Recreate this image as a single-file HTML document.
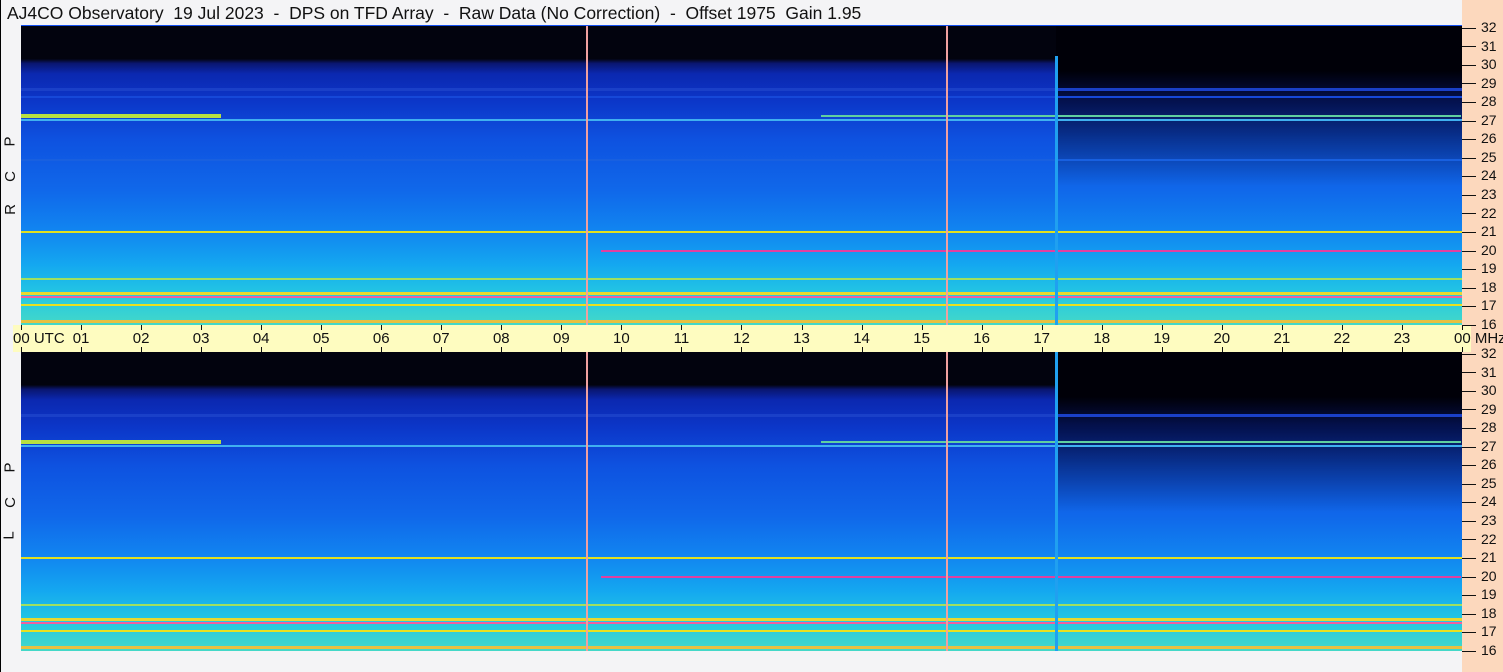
<!DOCTYPE html>
<html><head><meta charset="utf-8"><style>
body{margin:0;width:1503px;height:672px;background:#f4f4f6;position:relative;overflow:hidden;font-family:"Liberation Sans",sans-serif;border-left:1px solid #000;box-sizing:border-box}
.t{position:absolute;left:6px;top:3px;font-size:17.5px;color:#111;white-space:pre}
.rs{position:absolute;left:1461px;top:0;width:42px;height:672px;background:#fcd8bd}
.sp{position:absolute;left:20px;width:1441px;height:299px;overflow:hidden;border-top:1px solid #1450f0;
background:linear-gradient(#02030e 0%,#02030e 11%,#0a1670 12.5%,#0b28b0 16%,#0c36c8 25%,#0e52e0 38%,#1068ea 55%,#1184f0 68%,#14a8f0 80%,#24c8e2 90%,#44d8c8 100%)}
.dk{position:absolute;left:1035px;top:0;width:406px;height:160px;background:linear-gradient(#000008 0%,#000008 28%,rgba(0,0,20,.7) 45%,rgba(0,0,30,0) 100%)}
.h{position:absolute;left:0;height:2px}
.v{position:absolute;top:0;width:2px;height:299px}
.ax{position:absolute;left:12px;top:325px;width:1458px;height:27px;background:#fefcc0}
.ax span{position:absolute;top:5px;font-size:15px;transform:translateX(-50%);color:#111}
.tk{position:absolute;width:1px;height:5px;background:#111}
.yl{position:absolute;left:1461px;font-size:14px;color:#111;white-space:nowrap}
.yl i{display:inline-block;width:14px;height:1px;background:#111;vertical-align:middle;margin-right:5px}
.lb{position:absolute;left:4px;font-size:15px;color:#111;transform:rotate(-90deg)}
.mhz{position:absolute;left:1453px;top:330px;font-size:15px;color:#111;white-space:pre}
</style></head><body>
<div class="rs"></div>
<div class="t">AJ4CO Observatory  19 Jul 2023  -  DPS on TFD Array  -  Raw Data (No Correction)  -  Offset 1975  Gain 1.95</div>
<div class="lb" style="top:133px">P</div><div class="lb" style="top:168px">C</div><div class="lb" style="top:201px">R</div>
<div class="lb" style="top:459px">P</div><div class="lb" style="top:494px">C</div><div class="lb" style="top:527px">L</div>

<div class="sp" style="top:25px">
<div class="dk"></div>
<div class="h" style="top:62px;width:1441px;background:#1a40c8;height:3px"></div>
<div class="h" style="top:70px;width:1441px;background:#1648d8"></div>
<div class="h" style="top:88px;width:200px;background:#b8e040;height:4px"></div>
<div class="h" style="top:93px;width:1441px;background:#40b0f0;height:2px"></div>
<div class="h" style="top:89px;left:800px;width:640px;background:#60d0a0"></div>
<div class="h" style="top:133px;width:1441px;background:#1860e0"></div>
<div class="h" style="top:205px;width:1441px;background:#e0e020"></div>
<div class="h" style="top:224px;left:580px;width:860px;background:#e040a0"></div>
<div class="h" style="top:252px;width:1441px;background:#a0e060"></div>
<div class="h" style="top:266px;width:1441px;background:#e8d830;height:3px"></div>
<div class="h" style="top:270px;width:1441px;background:#f060a0"></div>
<div class="h" style="top:278px;width:1441px;background:#e8e020;height:2px"></div>
<div class="h" style="top:294px;width:1441px;background:#e8c040;height:3px"></div>
<div class="v" style="left:565px;background:#f0a0a0"></div>
<div class="v" style="left:925px;background:#f0a0a0"></div>
<div class="v" style="left:1034px;background:#20a0f0;width:3px;top:30px"></div>
</div>

<div class="sp" style="top:351px">
<div class="dk"></div>
<div class="h" style="top:62px;width:1441px;background:#1a40c8;height:3px"></div>
<div class="h" style="top:88px;width:200px;background:#b8e040;height:4px"></div>
<div class="h" style="top:93px;width:1441px;background:#40b0f0;height:2px"></div>
<div class="h" style="top:89px;left:800px;width:640px;background:#60d0a0"></div>
<div class="h" style="top:205px;width:1441px;background:#e0e020"></div>
<div class="h" style="top:224px;left:580px;width:860px;background:#e040a0"></div>
<div class="h" style="top:252px;width:1441px;background:#a0e060"></div>
<div class="h" style="top:266px;width:1441px;background:#e8d830;height:3px"></div>
<div class="h" style="top:270px;width:1441px;background:#f060a0"></div>
<div class="h" style="top:278px;width:1441px;background:#e8e020;height:2px"></div>
<div class="h" style="top:294px;width:1441px;background:#e8c040;height:3px"></div>
<div class="v" style="left:565px;background:#f0a0a0"></div>
<div class="v" style="left:925px;background:#f0a0a0"></div>
<div class="v" style="left:1034px;background:#20a0f0;width:3px;top:0"></div>
</div>

<div class="ax" id="ax"></div>
<div class="mhz">00 MHz</div>
<div id="yl"></div>
<script>
var ax=document.getElementById('ax'),h='';
for(var i=0;i<=24;i++){var x=8+i*60.04;var l=(i%24<10?'0':'')+(i%24);
if(i==0){h+='<span style="left:0px;transform:none">00  UTC</span>';}
else if(i<24) h+='<span style="left:'+x+'px">'+l+'</span>';
h+='<div class="tk" style="left:'+x+'px;top:0"></div><div class="tk" style="left:'+x+'px;bottom:0"></div>';}
ax.innerHTML=h;
var y='';for(var p=0;p<2;p++){var b=p?353:27;for(var m=32;m>=16;m--){if(p==0&&m==16){}var yy=b+(32-m)*18.56;y+='<div class="yl" style="top:'+(yy-8)+'px"><i></i>'+m+'</div>';}}
document.getElementById('yl').innerHTML=y;
</script>
</body></html>
